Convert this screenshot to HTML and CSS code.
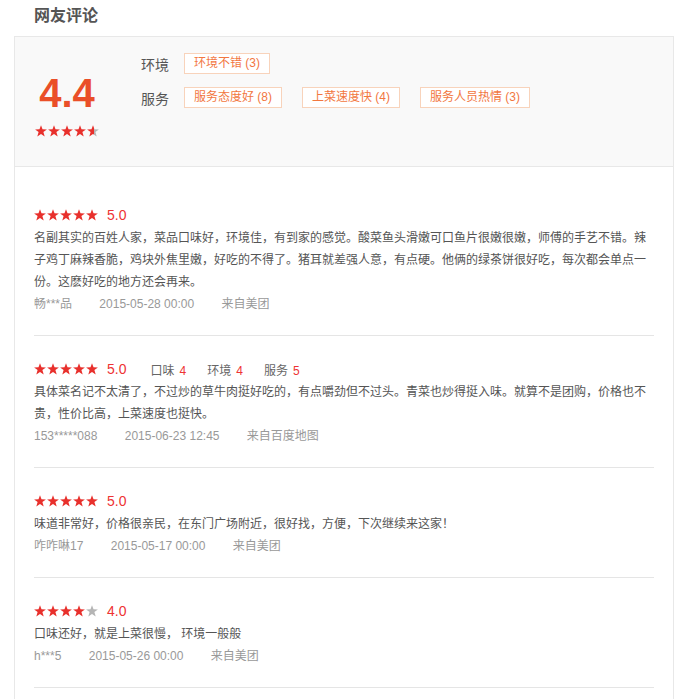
FILE: index.html
```html
<!DOCTYPE html>
<html lang="zh-CN">
<head>
  <meta charset="UTF-8">
  <title>网友评论</title>
  <link rel="stylesheet" href="styles.css">
</head>
<body>

<svg class="defs" width="0" height="0">
  <defs>
    <symbol id="star" viewBox="0 0 12 12">
      <polygon points="6,0.2 7.5,4.3 11.9,4.4 8.4,7.1 9.7,11.4 6,8.9 2.3,11.4 3.6,7.1 0.1,4.4 4.5,4.3"/>
    </symbol>
    <linearGradient id="half">
      <stop offset="55%" stop-color="#e8302c"/>
      <stop offset="55%" stop-color="#b5b5b5"/>
    </linearGradient>
  </defs>
</svg>

<h2 class="title">网友评论</h2>

<div class="comments">
  <div class="summary">
    <div class="overall">
      <div class="big-score">4.4</div>
      <svg class="stars" viewBox="0 0 64 12">
        <use href="#star" x="0" width="12" height="12" class="on"/>
        <use href="#star" x="13" width="12" height="12" class="on"/>
        <use href="#star" x="26" width="12" height="12" class="on"/>
        <use href="#star" x="39" width="12" height="12" class="on"/>
        <use href="#star" x="52" width="12" height="12" fill="url(#half)"/>
      </svg>
    </div>
    <div class="tags">
      <div class="tag-row">
        <span class="tag-label">环境</span>
        <span class="tag">环境不错 (3)</span>
      </div>
      <div class="tag-row">
        <span class="tag-label">服务</span>
        <span class="tag">服务态度好 (8)</span>
        <span class="tag">上菜速度快 (4)</span>
        <span class="tag">服务人员热情 (3)</span>
      </div>
    </div>
  </div>

  <ul class="review-list">
    <li class="review">
      <div class="rating">
        <svg class="stars" viewBox="0 0 64 12">
          <use href="#star" x="0" width="12" height="12" class="on"/>
          <use href="#star" x="13" width="12" height="12" class="on"/>
          <use href="#star" x="26" width="12" height="12" class="on"/>
          <use href="#star" x="39" width="12" height="12" class="on"/>
          <use href="#star" x="52" width="12" height="12" class="on"/>
        </svg>
        <span class="score">5.0</span>
      </div>
      <p class="text">名副其实的百姓人家，菜品口味好，环境佳，有到家的感觉。酸菜鱼头滑嫩可口鱼片很嫩很嫩，师傅的手艺不错。辣子鸡丁麻辣香脆，鸡块外焦里嫩，好吃的不得了。猪耳就差强人意，有点硬。他俩的绿茶饼很好吃，每次都会单点一份。这麽好吃的地方还会再来。</p>
      <div class="meta">
        <span>畅***品</span>
        <span>2015-05-28 00:00</span>
        <span>来自美团</span>
      </div>
    </li>

    <li class="review">
      <div class="rating">
        <svg class="stars" viewBox="0 0 64 12">
          <use href="#star" x="0" width="12" height="12" class="on"/>
          <use href="#star" x="13" width="12" height="12" class="on"/>
          <use href="#star" x="26" width="12" height="12" class="on"/>
          <use href="#star" x="39" width="12" height="12" class="on"/>
          <use href="#star" x="52" width="12" height="12" class="on"/>
        </svg>
        <span class="score">5.0</span>
        <span class="sub">口味<em>4</em></span>
        <span class="sub">环境<em>4</em></span>
        <span class="sub">服务<em>5</em></span>
      </div>
      <p class="text">具体菜名记不太清了，不过炒的草牛肉挺好吃的，有点嚼劲但不过头。青菜也炒得挺入味。就算不是团购，价格也不贵，性价比高，上菜速度也挺快。</p>
      <div class="meta">
        <span>153*****088</span>
        <span>2015-06-23 12:45</span>
        <span>来自百度地图</span>
      </div>
    </li>

    <li class="review">
      <div class="rating">
        <svg class="stars" viewBox="0 0 64 12">
          <use href="#star" x="0" width="12" height="12" class="on"/>
          <use href="#star" x="13" width="12" height="12" class="on"/>
          <use href="#star" x="26" width="12" height="12" class="on"/>
          <use href="#star" x="39" width="12" height="12" class="on"/>
          <use href="#star" x="52" width="12" height="12" class="on"/>
        </svg>
        <span class="score">5.0</span>
      </div>
      <p class="text">味道非常好，价格很亲民，在东门广场附近，很好找，方便，下次继续来这家！</p>
      <div class="meta">
        <span>咋咋啉17</span>
        <span>2015-05-17 00:00</span>
        <span>来自美团</span>
      </div>
    </li>

    <li class="review">
      <div class="rating">
        <svg class="stars" viewBox="0 0 64 12">
          <use href="#star" x="0" width="12" height="12" class="on"/>
          <use href="#star" x="13" width="12" height="12" class="on"/>
          <use href="#star" x="26" width="12" height="12" class="on"/>
          <use href="#star" x="39" width="12" height="12" class="on"/>
          <use href="#star" x="52" width="12" height="12" class="off"/>
        </svg>
        <span class="score">4.0</span>
      </div>
      <p class="text">口味还好，就是上菜很慢， 环境一般般</p>
      <div class="meta">
        <span>h***5</span>
        <span>2015-05-26 00:00</span>
        <span>来自美团</span>
      </div>
    </li>
  </ul>
</div>

</body>
</html>
```

FILE: styles.css
```css
body {
  margin: 0;
  padding: 4px 0 0 14px;
  font-family: "Liberation Sans", "Noto Sans CJK SC", sans-serif;
  font-size: 12px;
  color: #555;
  background-color: #fff;
}

.defs {
  position: absolute;
  width: 0;
  height: 0;
}

.title {
  margin: 0 0 8px 20px;
  font-size: 16px;
  line-height: 24px;
  font-weight: bold;
  color: #555;
}

.comments {
  width: 658px;
  border: 1px solid #e8e8e8;
  border-bottom: none;
}

/* summary block */

.summary {
  display: flex;
  height: 113px;
  padding: 16px 20px 0;
  background-color: #f9f9f9;
  border-bottom: 1px solid #e8e8e8;
}

.overall {
  width: 64px;
  padding-top: 20px;
  text-align: center;
}

.big-score {
  font-size: 40px;
  line-height: 40px;
  font-weight: bold;
  color: #ea4f28;
}

.stars {
  display: block;
  width: 64px;
  height: 12px;
  flex-shrink: 0;
}

.overall .stars {
  margin-top: 12px;
}

.stars .on { fill: #e8302c; }
.stars .off { fill: #b5b5b5; }

.tags {
  margin-left: 42px;
}

.tag-row {
  display: flex;
  align-items: center;
  margin-bottom: 13px;
}

.tag-label {
  width: 43px;
  font-size: 14px;
  color: #555;
}

.tag {
  margin-right: 20px;
  padding: 0 9px;
  line-height: 19px;
  font-size: 12px;
  color: #f2773f;
  background-color: #fff;
  border: 1px solid #f8d3bb;
}

/* review list */

.review-list {
  list-style: none;
  margin: 0;
  padding: 15px 19px 30px;
}

.review {
  padding: 21px 0 20px;
  border-bottom: 1px solid #e5e5e5;
}

.rating {
  display: flex;
  align-items: center;
  height: 24px;
}

.score {
  margin: 0 3px 0 9px;
  font-size: 14px;
  color: #e33;
}

.sub {
  margin-left: 21px;
  color: #666;
}

.sub em {
  margin-left: 5px;
  font-style: normal;
  color: #e33;
}

.text {
  margin: 0;
  line-height: 22px;
  color: #555;
}

.meta {
  line-height: 22px;
  color: #999;
}

.meta span {
  margin-right: 24px;
}
```
